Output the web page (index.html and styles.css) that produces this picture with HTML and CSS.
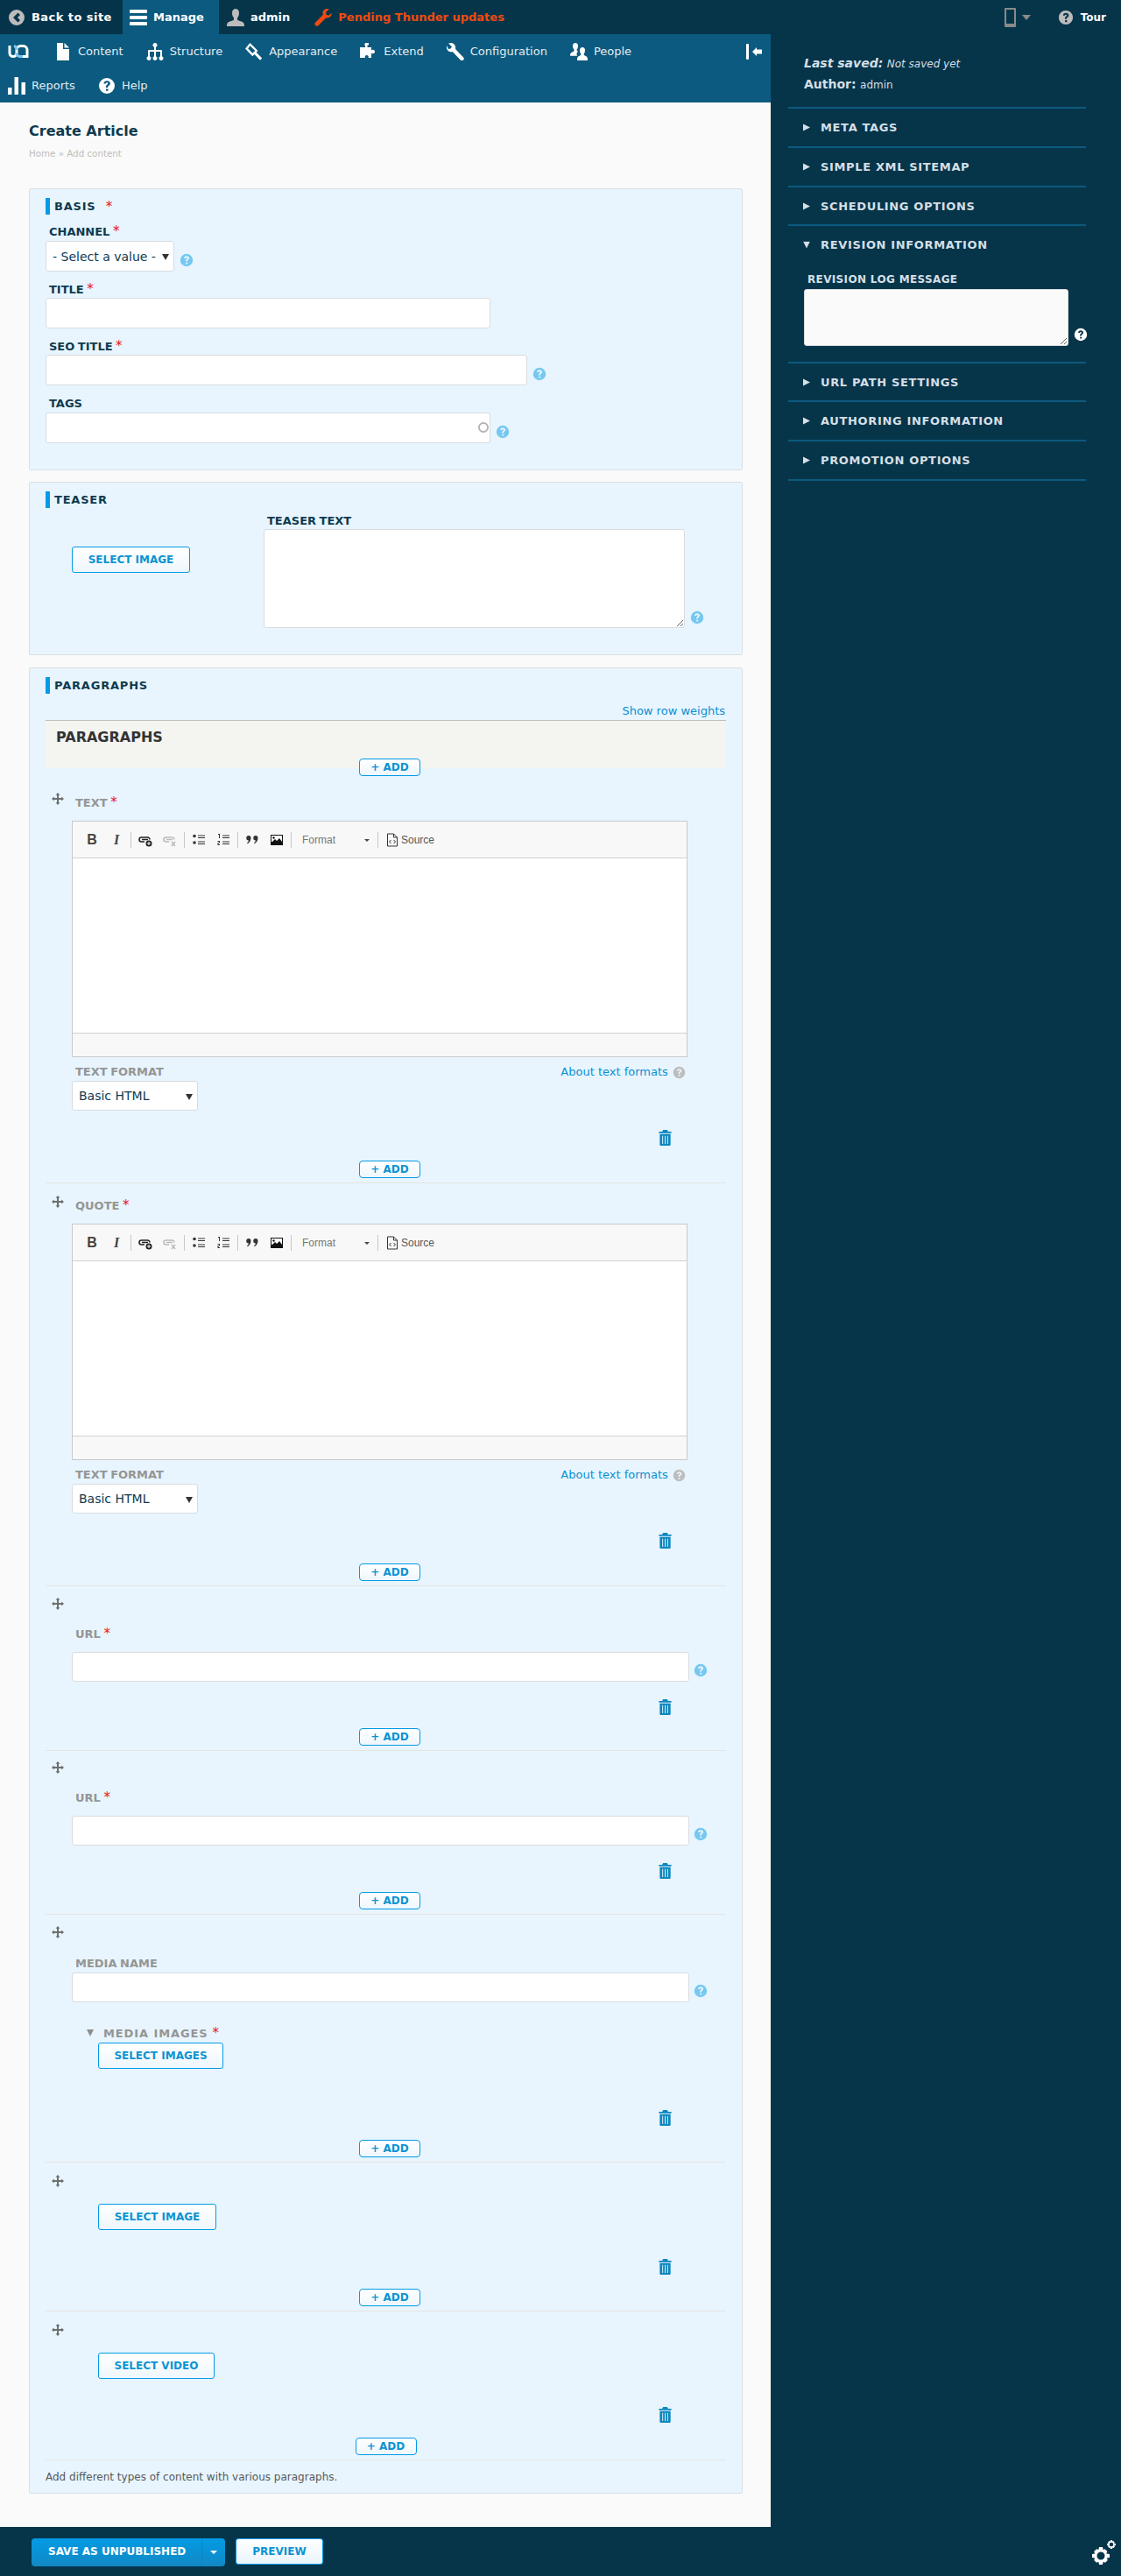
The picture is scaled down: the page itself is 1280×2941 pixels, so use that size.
FILE: index.html
```html
<!DOCTYPE html>
<html lang="en">
<head>
<meta charset="utf-8">
<title>Create Article</title>
<link rel="stylesheet" href="styles.css">
</head>
<body>
<svg class="defs" width="0" height="0" aria-hidden="true">
  <symbol id="i-help" viewBox="0 0 20 20"><path fill="currentColor" fill-rule="evenodd" d="M10 1a9 9 0 1 1 0 18a9 9 0 0 1 0-18zM6.400 7.600h2.500c.1-.9.5-1.300 1.200-1.300c.7 0 1.100.4 1.100 1c0 .6-.4.9-1 1.400c-1 .8-1.400 1.400-1.400 2.800v.4h2.300v-.3c0-.7.2-1 .9-1.500c1-.8 1.800-1.500 1.800-2.900c0-1.900-1.500-3-3.700-3c-2.300 0-3.600 1.300-3.700 3.400zM9 13.400v2.300h2.500v-2.300z"/></symbol>
  <symbol id="i-drag" viewBox="0 0 14 14"><path fill="currentColor" d="M7 0l2.500 2.800H8v3.200h3.200V4.500L14 7l-2.800 2.500V8H8v3.200h1.500L7 14l-2.500-2.800H6V8H2.800v1.500L0 7l2.800-2.500V6H6V2.800H4.500z"/></symbol>
  <symbol id="i-trash" viewBox="0 0 15 19"><path fill="currentColor" fill-rule="evenodd" d="M5 0h5l1 2h4v2H0V2h4zM1 5h13v13a1 1 0 0 1-1 1H2a1 1 0 0 1-1-1zM4 7v10h1V7zM7 7v10h1V7zM10 7v10h1V7z"/></symbol>
  <symbol id="i-back" viewBox="0 0 18 18"><path fill="currentColor" fill-rule="evenodd" d="M9 0a9 9 0 1 1 0 18A9 9 0 0 1 9 0zM10.500 3.500L5 9l5.500 5.500L13 12 10 9l3-3z"/></symbol>
  <symbol id="i-menu" viewBox="0 0 20 20"><path fill="currentColor" d="M1 1h18a1 1 0 0 1 1 1v2a1 1 0 0 1-1 1H1a1 1 0 0 1-1-1V2a1 1 0 0 1 1-1zM1 8h18a1 1 0 0 1 1 1v2a1 1 0 0 1-1 1H1a1 1 0 0 1-1-1V9a1 1 0 0 1 1-1zM1 15h18a1 1 0 0 1 1 1v2a1 1 0 0 1-1 1H1a1 1 0 0 1-1-1v-2a1 1 0 0 1 1-1z"/></symbol>
  <symbol id="i-user" viewBox="0 0 20 20"><path fill="currentColor" d="M10 0c2.800 0 4 2.200 4 5c0 2.500-1 4.500-2 5.500v2c0 1 5 1.500 7 3.500c.6.600 1 2 1 4H0c0-2 .4-3.400 1-4c2-2 7-2.500 7-3.500v-2C7 9.500 6 7.500 6 5c0-2.800 1.200-5 4-5z"/></symbol>
  <symbol id="i-wrench" viewBox="0 0 20 20"><path fill="currentColor" d="M14.500 0c-2.800 0-5 2.200-5 5c0 .7.100 1.200.4 1.800L.8 15.900a2.500 2.500 0 0 0 3.400 3.500l9.200-9.100c.4.100.8.200 1.200.2c2.900 0 5.300-2.600 5-5.700l-3.300 3-3-1v-3L16.900.5c-.7-.3-1.500-.5-2.400-.5z"/></symbol>
  <symbol id="i-doc" viewBox="0 0 20 20"><path fill="currentColor" d="M3 0h7v7h7v13H3zM11.500 0L17 5.500h-5.500z"/></symbol>
  <symbol id="i-tree" viewBox="0 0 20 20"><path fill="currentColor" d="M10 0a2.500 2.500 0 0 1 1 4.800V8h6a1 1 0 0 1 1 1v6.200a2.500 2.500 0 1 1-2 0V10h-5v5.200a2.500 2.500 0 1 1-2 0V10H4v5.200a2.500 2.500 0 1 1-2 0V9a1 1 0 0 1 1-1h6V4.800A2.500 2.500 0 0 1 10 0z"/></symbol>
  <symbol id="i-hammer" viewBox="0 0 20 20"><path fill="currentColor" fill-rule="evenodd" d="M5.500 0l9 9-1.800 1.800 6.500 6.700L17 19.800l-6.500-6.800-2.200 2.200L0 6.500zM5.500 3.200L3.200 6.500 8.300 11.800 11.300 9z"/></symbol>
  <symbol id="i-puzzle" viewBox="0 0 20 20"><path fill="currentColor" d="M6 0h4v2.500H8.500V5H13v3.500c1-1.200 4-1 4 1.500s-3 2.700-4 1.500V17H9.500c1-2-.5-3-1.700-3s-2.800 1-1.800 3H0V5h6V2.500H5z"/></symbol>
  <symbol id="i-spanner" viewBox="0 0 20 20"><path fill="currentColor" d="M4.500 0c-.9 0-1.700.2-2.400.6L6 4.500 4.500 6.500l-2.500.5L.4 3.200C.1 3.800 0 4.500 0 5.200c0 2.800 2.300 5 5 5c.6 0 1.100-.1 1.700-.3l9.100 9.500a2.200 2.200 0 0 0 3.300-3L10 7C10.300 6.300 10 5 10 4.500 9.800 2 7.500 0 4.500 0z"/></symbol>
  <symbol id="i-people" viewBox="0 0 20 20"><path fill="currentColor" d="M6 0c2 0 3 1.500 3 3.500c0 1.500-.5 3-1.300 4v1.200c.3.300.8.500 1.300.700c-.8 1-1.500 2-1.500 3c0 .8.300 1.600.7 2.300H0c0-1.800.6-3 1.500-3.600c1.200-.9 3-1 3-2V7.500C3.500 6.500 3 5 3 3.500 3 1.500 4 0 6 0zM14 5c2 0 3 1.500 3 3.500c0 1.500-.5 3-1.300 4v1c0 1 2 1.200 3.300 2.200c.7.500 1 1.800 1 4.300H8c0-2.500.3-3.800 1-4.300c1.300-1 3.300-1.200 3.300-2.200v-1c-.8-1-1.300-2.500-1.300-4C11 6.500 12 5 14 5z"/></symbol>
  <symbol id="i-bars" viewBox="0 0 20 20"><path fill="currentColor" d="M0 12h4.500v8H0zM7.500 0H12v20H7.500zM15.500 6H20v14h-4.500z"/></symbol>
  <symbol id="i-chev" viewBox="0 0 8 8"><path fill="currentColor" d="M0 0l8 4-8 4z"/></symbol>
  <symbol id="i-gear" viewBox="0 0 20 20"><path fill="currentColor" fill-rule="evenodd" d="M8 0h4l.6 3 2-.8 2.800 2.800-1.200 2.400 3.800.6v4l-3.200.6 1 2.400-2.800 2.800-2.400-1L12 20H8l-.6-3.200-2.400 1-2.800-2.800 1-2.400L0 12V8l3.200-.6L2.200 5 5 2.200l2.400.8zM10 5.500a4.500 4.500 0 1 0 0 9a4.500 4.500 0 0 0 0-9z"/></symbol>
  <symbol id="t-link" viewBox="0 0 16 16"><path fill="none" stroke="#222" stroke-width="1.600" d="M7 10H3.500a2.500 2.500 0 0 1 0-5h7a2.500 2.500 0 0 1 2.500 2.500M4 7.500h7"/><circle cx="12" cy="12" r="3.500" fill="#222"/><path stroke="#fff" d="M12 10v4M10 12h4"/></symbol>
  <symbol id="t-unlink" viewBox="0 0 16 16"><path fill="none" stroke="#bbb" stroke-width="1.600" d="M7 10H3.500a2.500 2.500 0 0 1 0-5h7a2.500 2.500 0 0 1 2.500 2.500M4 7.500h7M10 10l4 5M14 10l-4 5"/></symbol>
  <symbol id="t-ul" viewBox="0 0 16 16"><circle cx="3" cy="3.500" r="1.800" fill="#333"/><circle cx="3" cy="11" r="1.800" fill="#333"/><path fill="#333" d="M7 2.500h8v1H7zM7 5h8v1H7zM7 9.500h8v1H7zM7 12h8v1H7z"/></symbol>
  <symbol id="t-ol" viewBox="0 0 16 16"><path fill="#333" d="M2 1h2v5H3V2H2zM7 2.500h8v1H7zM7 5h8v1H7zM7 9.500h8v1H7zM7 12h8v1H7zM1.500 9H4v2.500H2.500V13H4v1H1.500v-3H3v-1H1.500z"/></symbol>
  <symbol id="t-quote" viewBox="0 0 16 16"><path fill="#333" d="M4 3a2.500 2.500 0 0 1 2.500 2.500c0 3-1.500 5.500-3.800 6.800l-.7-.9c1-.8 1.700-1.800 1.900-3A2.500 2.500 0 0 1 4 3zM12 3a2.500 2.500 0 0 1 2.500 2.500c0 3-1.500 5.500-3.800 6.800l-.7-.9c1-.8 1.700-1.800 1.900-3A2.500 2.500 0 0 1 12 3z"/></symbol>
  <symbol id="t-image" viewBox="0 0 16 16"><rect x="1" y="2" width="14" height="12" fill="#111"/><rect x="2" y="3" width="12" height="7" fill="#fff"/><circle cx="4.500" cy="5.500" r="1.200" fill="#111"/><path fill="#111" d="M2 11l4-4 2 2 3-3 3 4v3H2z"/></symbol>
  <symbol id="t-source" viewBox="0 0 16 16"><path fill="none" stroke="#333" d="M2.500 1h7l4 4v10h-11zM9.500 1v4h4"/><path fill="none" stroke="#333" d="M6.500 8l-2 2 2 2M9.500 8l2 2-2 2"/></symbol>
</svg>

<header class="topbar">
  <a class="tb-item tb-back"><svg class="ico18 c-grey"><use href="#i-back"/></svg>Back to site</a>
  <a class="tb-item tb-manage"><svg class="ico20"><use href="#i-menu"/></svg>Manage</a>
  <a class="tb-item tb-admin"><svg class="ico20 c-grey"><use href="#i-user"/></svg>admin</a>
  <a class="tb-item tb-updates"><svg class="ico20"><use href="#i-wrench"/></svg>Pending Thunder updates</a>
  <div class="tb-right">
    <span class="phone"></span>
    <span class="phone-caret"></span>
    <a class="tb-item tb-tour"><svg class="ico18 c-grey"><use href="#i-help"/></svg>Tour</a>
  </div>
</header>

<div class="columns">
  <div class="main">
    <nav class="menubar">
      <div class="nav-row">
        <svg class="logo" viewBox="0 0 24 15">
          <path fill="none" stroke="#fff" stroke-width="3" d="M2 1v8.500a4 4 0 0 0 8 0V6a4.500 4.500 0 0 1 4.500-4.500h3A4.500 4.500 0 0 1 22 6v7.500h-5"/>
          <path fill="none" stroke="#7cc6ec" stroke-width="3" d="M10 9.500a4 4 0 0 0 4 4h3M10 6a4 4 0 0 0-3-4.500"/>
        </svg>
        <a class="nav-item"><svg class="ico20"><use href="#i-doc"/></svg>Content</a>
        <a class="nav-item"><svg class="ico20"><use href="#i-tree"/></svg>Structure</a>
        <a class="nav-item"><svg class="ico20"><use href="#i-hammer"/></svg>Appearance</a>
        <a class="nav-item"><svg class="ico20"><use href="#i-puzzle"/></svg>Extend</a>
        <a class="nav-item"><svg class="ico20"><use href="#i-spanner"/></svg>Configuration</a>
        <a class="nav-item"><svg class="ico20"><use href="#i-people"/></svg>People</a>
        <span class="toggle"><i class="toggle-bar"></i><svg class="toggle-arrow" viewBox="0 0 11 10"><path fill="currentColor" d="M0 5l5-5v2.500h6v5H5V10z"/></svg></span>
      </div>
      <div class="nav-row">
        <a class="nav-item"><svg class="ico20"><use href="#i-bars"/></svg>Reports</a>
        <a class="nav-item"><svg class="ico20"><use href="#i-help"/></svg>Help</a>
      </div>
    </nav>

    <main class="content">
      <h1 class="page-title">Create Article</h1>
      <div class="crumbs">Home » Add content</div>

      <section class="panel panel-basis">
        <h2 class="panel-head">BASIS <span class="req req-head">*</span></h2>
        <div class="field f-channel">
          <label class="lbl">CHANNEL <span class="req">*</span></label>
          <div class="ctl">
            <div class="select s-channel"><select><option>- Select a value -</option></select></div>
            <svg class="help"><use href="#i-help"/></svg>
          </div>
        </div>
        <div class="field f-title">
          <label class="lbl">TITLE <span class="req">*</span></label>
          <div class="ctl"><input class="text w-508" type="text"></div>
        </div>
        <div class="field f-seo">
          <label class="lbl">SEO TITLE <span class="req">*</span></label>
          <div class="ctl"><input class="text w-550" type="text"><svg class="help"><use href="#i-help"/></svg></div>
        </div>
        <div class="field f-tags">
          <label class="lbl">TAGS</label>
          <div class="ctl">
            <div class="tagbox"><input class="text w-508" type="text"><i class="throbber"></i></div>
            <svg class="help"><use href="#i-help"/></svg>
          </div>
        </div>
      </section>

      <section class="panel panel-teaser">
        <h2 class="panel-head">TEASER</h2>
        <div class="teaser-grid">
          <div class="teaser-media"><button class="btn-o w-135" type="button">SELECT IMAGE</button></div>
          <div class="teaser-text">
            <label class="lbl">TEASER TEXT</label>
            <div class="ctl"><textarea class="area area-teaser"></textarea><svg class="help"><use href="#i-help"/></svg></div>
          </div>
        </div>
      </section>

      <section class="panel panel-para">
        <h2 class="panel-head">PARAGRAPHS</h2>
        <div class="row-weights"><a>Show row weights</a></div>
        <div class="para-th">PARAGRAPHS</div>
        <div class="add-row add-first"><button class="btn-add" type="button">+ ADD</button></div>

        <div class="item it-text">
          <div class="item-main">
            <svg class="drag"><use href="#i-drag"/></svg>
            <div class="item-body">
              <label class="lbl lbl-muted lbl-editor">TEXT <span class="req">*</span></label>
              <div class="editor">
                <div class="ed-bar">
                  <b class="tb-b">B</b><i class="tb-i">I</i><span class="tb-sep"></span>
                  <span class="tb-btn"><svg class="tbi"><use href="#t-link"/></svg></span>
                  <span class="tb-btn"><svg class="tbi"><use href="#t-unlink"/></svg></span><span class="tb-sep"></span>
                  <span class="tb-btn"><svg class="tbi"><use href="#t-ul"/></svg></span>
                  <span class="tb-btn"><svg class="tbi"><use href="#t-ol"/></svg></span><span class="tb-sep"></span>
                  <span class="tb-btn"><svg class="tbi"><use href="#t-quote"/></svg></span>
                  <span class="tb-btn"><svg class="tbi"><use href="#t-image"/></svg></span><span class="tb-sep"></span>
                  <span class="tb-combo">Format<i class="tb-caret"></i></span><span class="tb-sep"></span>
                  <span class="tb-source"><svg class="tbi"><use href="#t-source"/></svg>Source</span>
                </div>
                <div class="ed-body"></div>
                <div class="ed-foot"></div>
              </div>
              <div class="fmt">
                <div class="fmt-left">
                  <label class="lbl lbl-muted lbl-fmt">TEXT FORMAT</label>
                  <div class="select s-format"><select><option>Basic HTML</option></select></div>
                </div>
                <a class="fmt-link">About text formats <svg class="help help-grey"><use href="#i-help"/></svg></a>
              </div>
            </div>
          </div>
          <div class="trash-row t-text"><svg class="trash"><use href="#i-trash"/></svg></div>
          <div class="add-row"><button class="btn-add" type="button">+ ADD</button></div>
        </div>

        <div class="item it-quote">
          <div class="item-main">
            <svg class="drag"><use href="#i-drag"/></svg>
            <div class="item-body">
              <label class="lbl lbl-muted lbl-editor">QUOTE <span class="req">*</span></label>
              <div class="editor">
                <div class="ed-bar">
                  <b class="tb-b">B</b><i class="tb-i">I</i><span class="tb-sep"></span>
                  <span class="tb-btn"><svg class="tbi"><use href="#t-link"/></svg></span>
                  <span class="tb-btn"><svg class="tbi"><use href="#t-unlink"/></svg></span><span class="tb-sep"></span>
                  <span class="tb-btn"><svg class="tbi"><use href="#t-ul"/></svg></span>
                  <span class="tb-btn"><svg class="tbi"><use href="#t-ol"/></svg></span><span class="tb-sep"></span>
                  <span class="tb-btn"><svg class="tbi"><use href="#t-quote"/></svg></span>
                  <span class="tb-btn"><svg class="tbi"><use href="#t-image"/></svg></span><span class="tb-sep"></span>
                  <span class="tb-combo">Format<i class="tb-caret"></i></span><span class="tb-sep"></span>
                  <span class="tb-source"><svg class="tbi"><use href="#t-source"/></svg>Source</span>
                </div>
                <div class="ed-body"></div>
                <div class="ed-foot"></div>
              </div>
              <div class="fmt">
                <div class="fmt-left">
                  <label class="lbl lbl-muted lbl-fmt">TEXT FORMAT</label>
                  <div class="select s-format"><select><option>Basic HTML</option></select></div>
                </div>
                <a class="fmt-link">About text formats <svg class="help help-grey"><use href="#i-help"/></svg></a>
              </div>
            </div>
          </div>
          <div class="trash-row t-text"><svg class="trash"><use href="#i-trash"/></svg></div>
          <div class="add-row"><button class="btn-add" type="button">+ ADD</button></div>
        </div>

        <div class="item it-url">
          <div class="item-main">
            <svg class="drag"><use href="#i-drag"/></svg>
            <div class="item-body">
              <label class="lbl lbl-muted lbl-url">URL <span class="req">*</span></label>
              <div class="ctl"><input class="text w-704" type="text"><svg class="help"><use href="#i-help"/></svg></div>
            </div>
          </div>
          <div class="trash-row t-url"><svg class="trash"><use href="#i-trash"/></svg></div>
          <div class="add-row"><button class="btn-add" type="button">+ ADD</button></div>
        </div>

        <div class="item it-url it-url-next">
          <div class="item-main">
            <svg class="drag"><use href="#i-drag"/></svg>
            <div class="item-body">
              <label class="lbl lbl-muted lbl-url">URL <span class="req">*</span></label>
              <div class="ctl"><input class="text w-704" type="text"><svg class="help"><use href="#i-help"/></svg></div>
            </div>
          </div>
          <div class="trash-row t-url"><svg class="trash"><use href="#i-trash"/></svg></div>
          <div class="add-row"><button class="btn-add" type="button">+ ADD</button></div>
        </div>

        <div class="item it-media">
          <div class="item-main">
            <svg class="drag"><use href="#i-drag"/></svg>
            <div class="item-body">
              <label class="lbl lbl-muted lbl-media">MEDIA NAME</label>
              <div class="ctl"><input class="text w-704" type="text"><svg class="help"><use href="#i-help"/></svg></div>
              <div class="media-head"><i class="arrow-down"></i><span class="lbl-muted media-title">MEDIA IMAGES</span><span class="req req-media">*</span></div>
              <button class="btn-o w-143 btn-media" type="button">SELECT IMAGES</button>
            </div>
          </div>
          <div class="trash-row t-media"><svg class="trash"><use href="#i-trash"/></svg></div>
          <div class="add-row"><button class="btn-add" type="button">+ ADD</button></div>
        </div>

        <div class="item it-pick">
          <div class="item-main">
            <svg class="drag"><use href="#i-drag"/></svg>
            <div class="item-body pick-body"><button class="btn-o w-135" type="button">SELECT IMAGE</button></div>
          </div>
          <div class="trash-row t-pick"><svg class="trash"><use href="#i-trash"/></svg></div>
          <div class="add-row"><button class="btn-add" type="button">+ ADD</button></div>
        </div>

        <div class="it-pick it-last">
          <div class="item-main">
            <svg class="drag"><use href="#i-drag"/></svg>
            <div class="item-body pick-body"><button class="btn-o w-133" type="button">SELECT VIDEO</button></div>
          </div>
          <div class="trash-row t-pick"><svg class="trash"><use href="#i-trash"/></svg></div>
        </div>

        <div class="add-row add-last"><button class="btn-add" type="button">+ ADD</button></div>
        <p class="para-desc">Add different types of content with various paragraphs.</p>
      </section>
    </main>
  </div>

  <aside class="aside">
    <div class="meta">
      <p class="meta-line"><em><b>Last saved:</b> <span class="meta-dim">Not saved yet</span></em></p>
      <p class="meta-line"><b>Author:</b> <span class="meta-dim">admin</span></p>
    </div>
    <div class="acc"><svg class="acc-arrow"><use href="#i-chev"/></svg>META TAGS</div>
    <div class="acc"><svg class="acc-arrow"><use href="#i-chev"/></svg>SIMPLE XML SITEMAP</div>
    <div class="acc acc-short"><svg class="acc-arrow"><use href="#i-chev"/></svg>SCHEDULING OPTIONS</div>
    <div class="acc-open">
      <div class="acc"><svg class="acc-arrow acc-arrow-open"><use href="#i-chev"/></svg>REVISION INFORMATION</div>
      <label class="rev-label">REVISION LOG MESSAGE</label>
      <div class="rev-ctl"><textarea class="area area-rev"></textarea><svg class="help help-white"><use href="#i-help"/></svg></div>
    </div>
    <div class="acc acc-short"><svg class="acc-arrow"><use href="#i-chev"/></svg>URL PATH SETTINGS</div>
    <div class="acc"><svg class="acc-arrow"><use href="#i-chev"/></svg>AUTHORING INFORMATION</div>
    <div class="acc acc-last"><svg class="acc-arrow"><use href="#i-chev"/></svg>PROMOTION OPTIONS</div>
  </aside>
</div>

<footer class="bottombar">
  <div class="split">
    <span class="split-main">SAVE AS UNPUBLISHED</span>
    <span class="split-caret"><i></i></span>
  </div>
  <button class="btn-preview" type="button">PREVIEW</button>
  <div class="gears">
    <svg class="gear-big"><use href="#i-gear"/></svg>
    <svg class="gear-small"><use href="#i-gear"/></svg>
  </div>
</footer>
</body>
</html>
```

FILE: styles.css
```css
* { box-sizing: border-box; }
html, body { margin: 0; padding: 0; }
body {
  font-family: "DejaVu Sans", sans-serif;
  font-size: 13px;
  color: #0f3a4f;
  background: #fafafa;
  width: 1280px;
  height: 2941px;
  overflow: hidden;
}
.defs { position: absolute; }
a { color: inherit; text-decoration: none; }
p, h1, h2 { margin: 0; }

.ico18 { width: 18px; height: 18px; flex: none; color: #fff; }
.ico20 { width: 20px; height: 20px; flex: none; color: #fff; }
.c-grey { color: #bcbcbc; }

/* top bar */
.topbar { height: 39px; background: #06354a; display: flex; align-items: stretch; color: #fff; font-weight: 700; }
.tb-item { display: flex; align-items: center; }
.tb-back { width: 140px; padding-left: 10px; gap: 8px; background: #05344a; letter-spacing: .45px; }
.tb-manage { width: 110px; padding-left: 8px; gap: 7px; background: #0c5a7f; }
.tb-admin { padding-left: 9px; gap: 7px; }
.tb-updates { padding-left: 28px; gap: 7px; color: #ee4a10; }
.tb-updates .ico20 { color: #ee4a10; }
.tb-right { margin-left: auto; display: flex; align-items: center; }
.phone { width: 13px; height: 22px; border: 2px solid #8a8a8a; border-bottom-width: 4px; border-radius: 1px; background: #06354a; }
.phone-caret { width: 0; height: 0; margin-left: 7px; border: 5px solid transparent; border-top: 6px solid #8a8a8a; border-bottom: 0; }
.tb-tour { padding: 0 17px 0 31px; gap: 8px; font-size: 12px; }

/* layout */
.columns { display: flex; height: 2846px; }
.main { width: 880px; display: flex; flex-direction: column; }
.aside { width: 400px; background: #06354a; padding: 0 40px 0 20px; color: #d5dfe6; }

/* nav */
.menubar { height: 78px; background: #0c5a7f; color: #e2ecf1; }
.nav-row { height: 39px; display: flex; align-items: center; padding-left: 9px; gap: 26px; }
.logo { width: 24px; height: 15px; margin-right: 3px; flex: none; }
.nav-item { display: flex; align-items: center; gap: 7px; }
.toggle { margin-left: auto; margin-right: 10px; display: flex; align-items: center; gap: 4px; color: #fff; }
.toggle-bar { width: 3px; height: 18px; background: #fff; border-radius: 1px; }
.toggle-arrow { width: 11px; height: 10px; }

/* content */
.content { flex: 1; padding: 23px 32px 0 33px; }
.page-title { font-size: 16px; font-weight: 700; line-height: 19px; color: #0f3a4f; }
.crumbs { font-size: 10.300px; line-height: 13px; color: #bdbdbd; margin-top: 10px; }

.panel { background: #e8f5fe; border: 1px solid #dadfe3; border-radius: 2px; padding: 10px 18px 0; }
.panel-basis { margin-top: 33px; height: 322px; }
.panel-teaser { margin-top: 13px; height: 198px; }
.panel-para { margin-top: 14px; height: 2085px; }
.panel-head { height: 19px; display: flex; align-items: center; border-left: 5px solid #039be5; padding-left: 5px; font-size: 13px; font-weight: 700; letter-spacing: .8px; color: #0f3a4f; white-space: pre; }
.req { color: #e8141c; font-weight: 400; font-size: 15px; line-height: 10px; letter-spacing: 0; }
.req-head { margin-left: 6px; }
.req-media { margin-left: 5px; }

.lbl { display: block; height: 16px; line-height: 16px; font-weight: 700; padding-left: 4px; color: #0f3a4f; white-space: pre; word-spacing: -1px; }
.lbl-muted { color: #959595; }
.ctl { display: flex; align-items: flex-end; }
.field { margin-top: 13px; }
.f-channel { margin-top: 12px; }
.f-channel .ctl { margin-top: 2px; }
.f-title .ctl { margin-top: 1px; }
.f-seo .ctl { margin-top: 1px; }
.f-tags { margin-top: 13px; }
.f-tags .ctl { margin-top: 2px; }

.text { height: 35px; background: #fff; border: 1px solid #d8dce0; border-radius: 3px; margin: 0; padding: 0 8px; outline: 0; flex: none; }
.w-508 { width: 508px; }
.w-550 { width: 550px; }
.w-704 { width: 705px; height: 34px; }
.help { width: 16px; height: 16px; margin: 0 0 5px 6px; flex: none; color: #76c8f0; }
.w-704 + .help { margin-left: 5px; }
.help-grey { color: #bdbdbd; margin: 0 0 0 1px; width: 15px; height: 15px; }
.help-white { color: #fff; margin-bottom: 5px; }

.select { position: relative; background: #fff; border: 1px solid #d8dce0; border-radius: 3px; height: 35px; flex: none; }
.select::after { content: ""; position: absolute; right: 5px; top: 14px; border: 4px solid transparent; border-top: 7px solid #333; border-bottom: 0; }
.select select { appearance: none; -webkit-appearance: none; border: 0; background: transparent; height: 100%; width: 100%; font: 14px "DejaVu Sans", sans-serif; color: #0f3a4f; padding: 0 0 0 7px; outline: 0; }
.s-channel { width: 147px; }
.s-format { width: 144px; height: 34px; margin-top: 2px; }

.tagbox { position: relative; flex: none; display: flex; }
.throbber { position: absolute; right: 2px; top: 11px; width: 12px; height: 12px; border: 2px solid #b3b3b3; border-radius: 50%; }

/* teaser */
.teaser-grid { display: flex; }
.teaser-media { width: 249px; padding: 44px 0 0 30px; }
.teaser-text { margin-top: 7px; }
.teaser-text .ctl { margin-top: 1px; }
.area { display: block; background: #fff; border: 1px solid #d8dce0; border-radius: 3px; margin: 0; padding: 4px; outline: 0; resize: vertical; flex: none; }
.area-teaser { width: 481px; height: 113px; }
.teaser-text .help { margin-bottom: 4px; }

.btn-o { display: block; height: 30px; background: linear-gradient(#fff, #eef7fd); border: 1px solid #039be5; border-radius: 3px; color: #0c93d2; font: 700 12px "DejaVu Sans", sans-serif; padding: 0; }
.w-135 { width: 135px; }
.w-143 { width: 143px; }
.w-133 { width: 133px; }

/* paragraphs */
.row-weights { height: 17px; margin-top: 12px; text-align: right; padding-right: 1px; font-size: 13px; line-height: 16px; color: #0a8fd0; }
.para-th { height: 55px; margin-top: 1px; background: #f4f4f0; border-top: 1px solid #bfbfbf; padding: 9px 12px 0; font-size: 16px; font-weight: 700; line-height: 20px; color: #333; }
.add-row { display: flex; justify-content: center; padding-left: 9px; height: 20px; }
.add-first { margin-top: -11px; }
.btn-add { width: 70px; height: 20px; background: linear-gradient(#fff, #eef7fd); border: 1px solid #039be5; border-radius: 4px; padding: 0; color: #0c93d2; font: 700 12px "DejaVu Sans", sans-serif; }

.item { border-bottom: 1px solid #e6e4df; padding-bottom: 5px; }
.item-main { display: flex; }
.drag { width: 14px; height: 14px; margin: 0 9px 0 7px; flex: none; color: #6f6f6f; }
.item-body { flex: 1; min-width: 0; }

.it-text { padding-top: 19px; }
.it-quote { padding-top: 14px; }
.it-text .item-body, .it-quote .item-body { padding-top: 4px; }
.lbl-editor { margin-bottom: 12px; }
.editor { width: 703px; height: 270px; border: 1px solid #c9c9c9; display: flex; flex-direction: column; background: #fff; }
.ed-bar { height: 42px; background: #f8f8f8; border-bottom: 1px solid #d1d1d1; display: flex; align-items: center; padding-left: 8px; flex: none; color: #474747; }
.tb-b, .tb-i { width: 28px; text-align: center; font: 700 16px "Liberation Sans", sans-serif; color: #444; }
.tb-i { font: italic 700 16px "Liberation Serif", serif; }
.tb-btn { width: 28px; display: flex; justify-content: center; }
.tbi { width: 16px; height: 16px; flex: none; }
.tb-sep { width: 1px; height: 18px; background: #c6c6c6; margin: 0 2px; flex: none; }
.tb-combo { width: 94px; padding-left: 10px; display: flex; align-items: center; font: 12px/16px "Liberation Sans", sans-serif; color: #777; position: relative; }
.tb-caret { position: absolute; right: 7px; top: 7px; border: 3px solid transparent; border-top: 3px solid #474747; border-bottom: 0; }
.tb-source { display: flex; align-items: center; gap: 2px; margin-left: 6px; font: 12px/16px "Liberation Sans", sans-serif; color: #555; }
.ed-body { flex: 1; background: #fff; }
.ed-foot { height: 27px; background: #f8f8f8; border-top: 1px solid #d1d1d1; flex: none; }

.fmt { width: 703px; display: flex; justify-content: space-between; align-items: flex-start; margin-top: 9px; }
.fmt-link { display: flex; align-items: center; font-size: 13px; line-height: 16px; color: #0a8fd0; white-space: pre; padding-right: 2px; }
.trash-row { display: flex; justify-content: flex-end; padding-right: 62px; }
.trash { width: 15px; height: 18px; color: #0c87bf; flex: none; }
.t-text { margin-top: 22px; margin-bottom: 17px; }

.it-url { padding-top: 13px; }
.it-url-next { padding-top: 12px; }
.it-url .item-body { padding-top: 34px; }
.lbl-url { margin-bottom: 12px; }
.t-url { margin-top: 20px; margin-bottom: 15px; }

.it-media { padding-top: 13px; }
.it-media .item-body { padding-top: 35px; }
.lbl-media { margin-bottom: 2px; }
.media-head { display: flex; align-items: center; height: 16px; margin-top: 27px; padding-left: 17px; white-space: pre; font-weight: 700; }
.arrow-down { width: 0; height: 0; border: 4px solid transparent; border-top: 8px solid #8d8d8d; border-bottom: 0; margin-right: 11px; }
.media-title { letter-spacing: .9px; }
.btn-media { margin: 3px 0 0 30px; }
.t-media { margin-top: 47px; margin-bottom: 16px; }

.it-pick { padding-top: 14px; }
.pick-body { padding: 33px 0 0 30px; }
.t-pick { margin-top: 33px; margin-bottom: 16px; }
.it-last .t-pick { margin-top: 32px; margin-bottom: 17px; }

.add-last { padding-left: 0; }
.para-desc { border-top: 1px solid #e6e4df; margin-top: 5px; padding-top: 12px; font-size: 12px; line-height: 15px; color: #595959; }

/* aside */
.meta { height: 83px; padding: 22px 0 0 18px; }
.meta-line { line-height: 23px; font-size: 14px; color: #d5dfe6; }
.meta-dim { font-weight: 400; font-size: 12px; }
.acc { height: 45px; border-top: 2px solid #0c5a7f; display: flex; align-items: center; padding-left: 17px; font-weight: 700; letter-spacing: .65px; white-space: pre; }
.acc-short { height: 44px; }
.acc-arrow { width: 8px; height: 9px; margin-right: 12px; color: #d5dfe6; flex: none; }
.acc-arrow-open { transform: rotate(90deg); }
.acc-open { height: 157px; }
.rev-label { display: block; margin: 10px 0 0 22px; height: 16px; line-height: 16px; font-size: 12px; font-weight: 700; letter-spacing: .35px; }
.rev-ctl { display: flex; align-items: flex-end; padding: 3px 0 0 18px; }
.area-rev { width: 302px; height: 65px; background: #fafafa; }
.acc-last { border-bottom: 2px solid #0c5a7f; height: 47px; }

/* bottom */
.bottombar { height: 56px; background: #06354a; display: flex; align-items: flex-start; padding: 13px 0 0 36px; position: relative; }
.split { width: 221px; height: 32px; border-radius: 4px; background: linear-gradient(#039be5, #1288c4); display: flex; color: #fff; font-weight: 700; font-size: 12px; }
.split-main { width: 195px; line-height: 31px; padding-left: 19px; border-right: 1px solid #1a7fb5; white-space: pre; }
.split-caret { flex: 1; display: flex; align-items: center; justify-content: center; }
.split-caret i { border: 4px solid transparent; border-top: 4px solid #fff; border-bottom: 0; }
.btn-preview { width: 100px; height: 30px; margin-left: 12px; background: linear-gradient(#fff, #eaf5fd); border: 1px solid #039be5; border-radius: 3px; color: #0c93d2; font: 700 12px "DejaVu Sans", sans-serif; padding: 0; }
.gears { position: absolute; right: 0; top: 0; width: 40px; height: 56px; }
.gear-big { position: absolute; left: 7px; top: 23px; width: 20px; height: 20px; color: #fff; }
.gear-small { position: absolute; left: 24px; top: 15px; width: 10px; height: 10px; color: #fff; }
```
